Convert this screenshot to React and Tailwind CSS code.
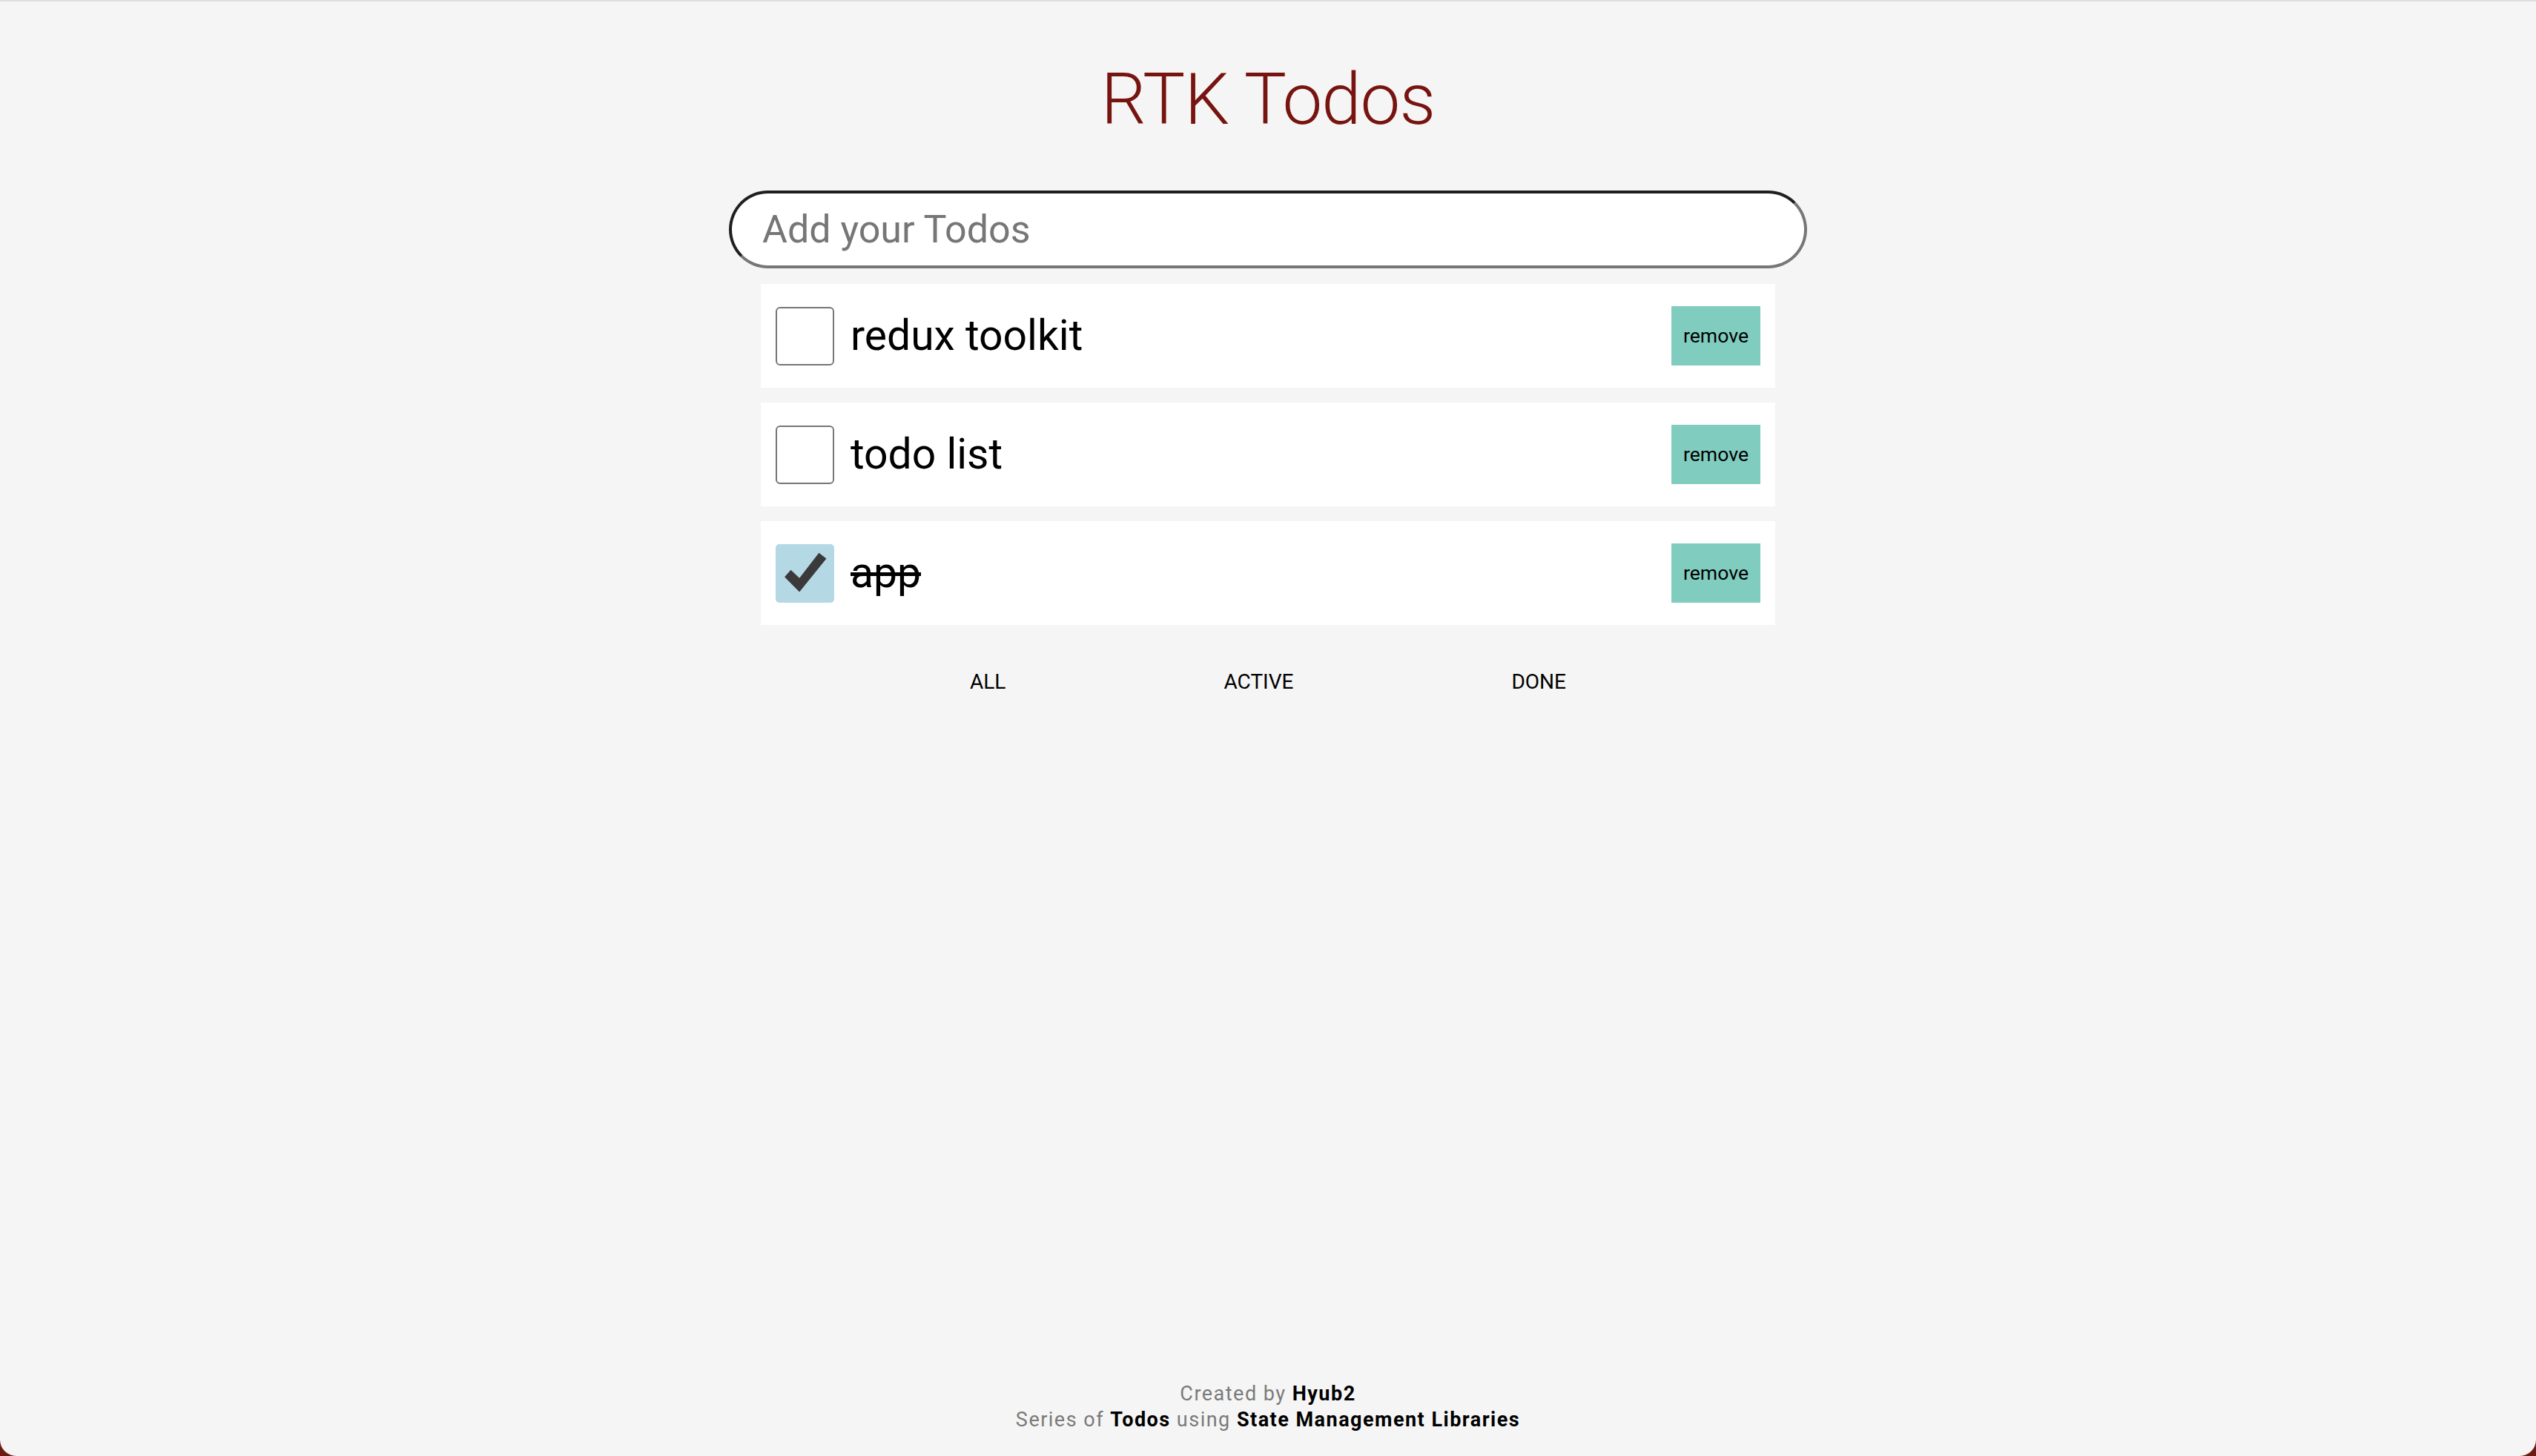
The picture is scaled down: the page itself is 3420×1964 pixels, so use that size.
import { useState } from 'react'

const initialTodos = [
  { id: 1, text: 'redux toolkit', done: false },
  { id: 2, text: 'todo list', done: false },
  { id: 3, text: 'app', done: true },
]

function CheckMark() {
  return (
    <svg viewBox="0 0 79 80" className="h-full w-full">
      <polygon
        points="11.7,44.7 20.3,35.3 32,46.3 58.6,12 68.8,19.7 32,65.3"
        fill="#3a3a3a"
      />
    </svg>
  )
}

function TodoRow({ todo, onToggle, onRemove }) {
  return (
    <li className="flex h-[140px] items-center bg-white px-[20px]">
      <button
        type="button"
        onClick={onToggle}
        className={
          todo.done
            ? 'h-[79px] w-[79px] shrink-0 rounded-[5px] bg-[#b5d8e5]'
            : 'h-[79px] w-[79px] shrink-0 rounded-[6px] border-[2.5px] border-[#767676] bg-white'
        }
      >
        {todo.done ? <CheckMark /> : null}
      </button>
      <span
        className={
          todo.done
            ? 'ml-[22px] flex-1 text-[57px] text-black line-through decoration-[5px]'
            : 'ml-[22px] flex-1 text-[57px] text-black'
        }
      >
        {todo.text}
      </span>
      <button
        type="button"
        onClick={onRemove}
        className="h-[80px] w-[120px] bg-[#80cdbf] text-[26.67px] text-black"
      >
        remove
      </button>
    </li>
  )
}

function App() {
  const [todos, setTodos] = useState(initialTodos)
  const [draft, setDraft] = useState('')
  const [filter, setFilter] = useState('all')

  const visibleTodos = todos.filter((todo) => {
    if (filter === 'active') {
      return !todo.done
    }
    if (filter === 'done') {
      return todo.done
    }
    return true
  })

  const handleSubmit = (event) => {
    event.preventDefault()
    if (!draft.trim()) {
      return
    }
    setTodos([...todos, { id: Date.now(), text: draft.trim(), done: false }])
    setDraft('')
  }

  return (
    <div className="h-screen bg-[#6d1b12] font-[Roboto,sans-serif]">
      <div className="flex h-full flex-col rounded-b-[22px] border-t-2 border-[#dedede] bg-[#f5f5f5]">
        <h1 className="mt-[76px] text-center text-[96px] font-light leading-[112px] tracking-[-0.01em] text-[#771410]">
          RTK Todos
        </h1>

        <form onSubmit={handleSubmit} className="mt-[67px] flex justify-center">
          <input
            value={draft}
            onChange={(event) => setDraft(event.target.value)}
            placeholder="Add your Todos"
            className="h-[105px] w-[1454px] rounded-full border-[4px] border-t-[#1f1f1f] border-l-[#1f1f1f] border-r-[#767676] border-b-[#767676] bg-white pl-[41px] text-[52px] text-black outline-none placeholder:text-[#767676]"
          />
        </form>

        <div className="mx-auto mt-[21px] w-[1368px]">
          <ul className="flex flex-col gap-[20px]">
            {visibleTodos.map((todo) => (
              <TodoRow
                key={todo.id}
                todo={todo}
                onToggle={() =>
                  setTodos(todos.map((item) => (item.id === todo.id ? { ...item, done: !item.done } : item)))
                }
                onRemove={() => setTodos(todos.filter((item) => item.id !== todo.id))}
              />
            ))}
          </ul>

          <div className="mt-[59px] flex justify-evenly">
            {['all', 'active', 'done'].map((name) => (
              <button
                key={name}
                type="button"
                onClick={() => setFilter(name)}
                className="px-[12px] py-[2px] text-[28px] uppercase leading-[31px] text-black"
              >
                {name}
              </button>
            ))}
          </div>
        </div>

        <footer className="mt-auto pb-[31px] text-center text-[27px] leading-[35px] tracking-[0.055em] text-[#7a7a7a]">
          <p>
            Created by <strong className="font-bold text-black">Hyub2</strong>
          </p>
          <p>
            Series of <strong className="font-bold text-black">Todos</strong> using{' '}
            <strong className="font-bold text-black">State Management Libraries</strong>
          </p>
        </footer>
      </div>
    </div>
  )
}

export default App
